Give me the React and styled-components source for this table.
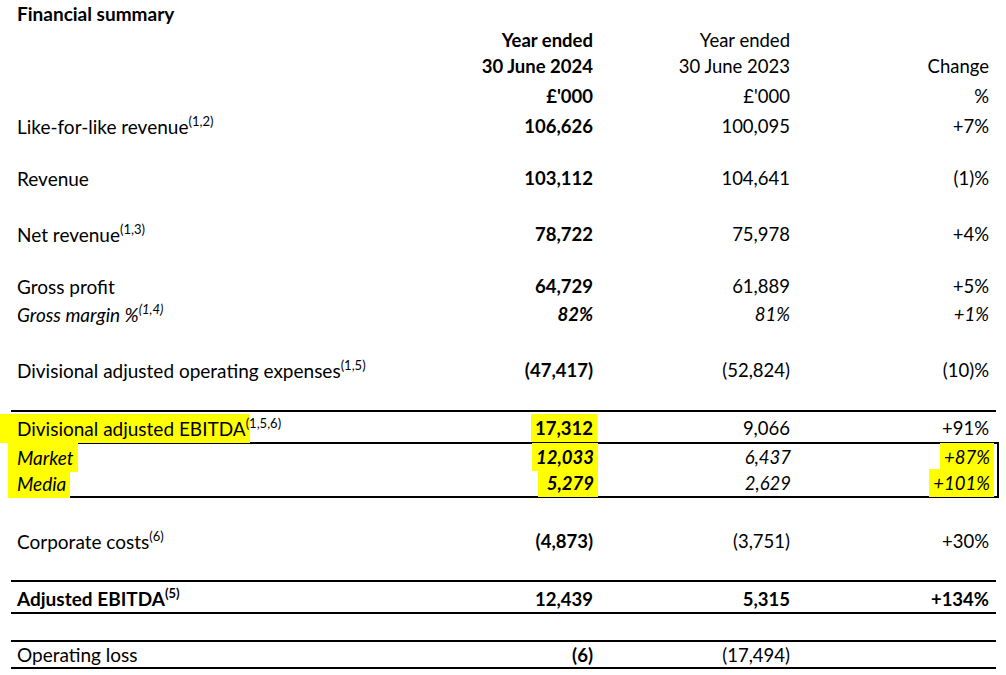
import React from "react";
import styled, { createGlobalStyle } from "styled-components";

const GlobalStyle = createGlobalStyle`
  body {
    margin: 0;
    background: #ffffff;
    color: #000000;
    font-family: Lato, "Open Sans", sans-serif;
    font-size: 19px;
  }
`;

const Sheet = styled.div`
  width: 985px;
  margin-left: 11px;
`;

const Title = styled.div`
  height: 27px;
  line-height: 27px;
  padding-left: 6px;
  font-weight: 700;
`;

const Row = styled.div`
  display: grid;
  grid-template-columns: 1fr 190px 197px 206px;
  align-items: center;
  height: ${(p) => p.$h || 26}px;
  padding-top: ${(p) => p.$pt || 0}px;
  border-top: ${(p) => (p.$top ? "2px solid #000" : "none")};
  border-bottom: ${(p) => (p.$bottom ? "2px solid #000" : "none")};
  font-weight: ${(p) => (p.$bold ? 700 : 400)};
  font-style: ${(p) => (p.$italic ? "italic" : "normal")};
  white-space: nowrap;
`;

const Gap = styled.div`
  height: ${(p) => p.$h}px;
`;

const Boxed = styled.div`
  width: 986px;
  border-top: 2px solid #000;
  border-bottom: 2px solid #000;
  border-right: 2px solid #000;
`;

const Label = styled.div`
  padding-left: 6px;
`;

const Cell = styled.div`
  text-align: right;
  font-size: 18.5px;
  padding-right: ${(p) => (p.$last ? 7 : 0)}px;
  font-weight: ${(p) => (p.$strong ? 700 : "inherit")};
`;

const Sup = styled.span`
  font-size: 13px;
  vertical-align: 8px;
  line-height: 0;
`;

const Mark = styled.span`
  background: #ffff00;
  padding: 3px ${(p) => p.$pr ?? 4}px 3px ${(p) => p.$pl ?? 4}px;
  margin-left: -${(p) => p.$pl ?? 4}px;
  margin-right: -${(p) => p.$pr ?? 4}px;
`;

function Line({ label, sup, a, b, c, ...rest }) {
  return (
    <Row {...rest}>
      <Label>
        {label}
        {sup && <Sup>{sup}</Sup>}
      </Label>
      <Cell $strong>{a}</Cell>
      <Cell>{b}</Cell>
      <Cell $last>{c}</Cell>
    </Row>
  );
}

export default function App() {
  return (
    <>
      <GlobalStyle />
      <Sheet>
        <Title>Financial summary</Title>
        <Line a="Year ended" b="Year ended" />
        <Line a="30 June 2024" b="30 June 2023" c="Change" />
        <Line $h={34} a="£'000" b="£'000" c="%" />

        <Line label="Like-for-like revenue" sup="(1,2)" a="106,626" b="100,095" c="+7%" />
        <Gap $h={26} />
        <Line label="Revenue" a="103,112" b="104,641" c="(1)%" />
        <Gap $h={30} />
        <Line label="Net revenue" sup="(1,3)" a="78,722" b="75,978" c="+4%" />
        <Gap $h={26} />
        <Line label="Gross profit" a="64,729" b="61,889" c="+5%" />
        <Line $h={30} $italic label="Gross margin %" sup="(1,4)" a="82%" b="81%" c="+1%" />
        <Gap $h={28} />
        <Line label="Divisional adjusted operating expenses" sup="(1,5)" a="(47,417)" b="(52,824)" c="(10)%" />
        <Gap $h={27} />

        <Line
          $top
          $h={28}
          $pt={2}
          label={<Mark $pl={17}>Divisional adjusted EBITDA</Mark>}
          sup="(1,5,6)"
          a={<Mark>17,312</Mark>}
          b="9,066"
          c="+91%"
        />
        <Boxed>
          <Line
            $italic
            label={<Mark $pl={9}>Market</Mark>}
            a={<Mark>12,033</Mark>}
            b="6,437"
            c={<Mark>+87%</Mark>}
          />
          <Line
            $italic
            label={<Mark $pl={9}>Media</Mark>}
            a={<Mark $pl={9}>5,279</Mark>}
            b="2,629"
            c={<Mark>+101%</Mark>}
          />
        </Boxed>

        <Gap $h={30} />
        <Line label="Corporate costs" sup="(6)" a="(4,873)" b="(3,751)" c="+30%" />
        <Gap $h={26} />
        <Line $top $bottom $bold $h={27} $pt={3} label="Adjusted EBITDA" sup="(5)" a="12,439" b="5,315" c="+134%" />
        <Gap $h={26} />
        <Line $top $bottom $h={25} label="Operating loss" a="(6)" b="(17,494)" />
      </Sheet>
    </>
  );
}
